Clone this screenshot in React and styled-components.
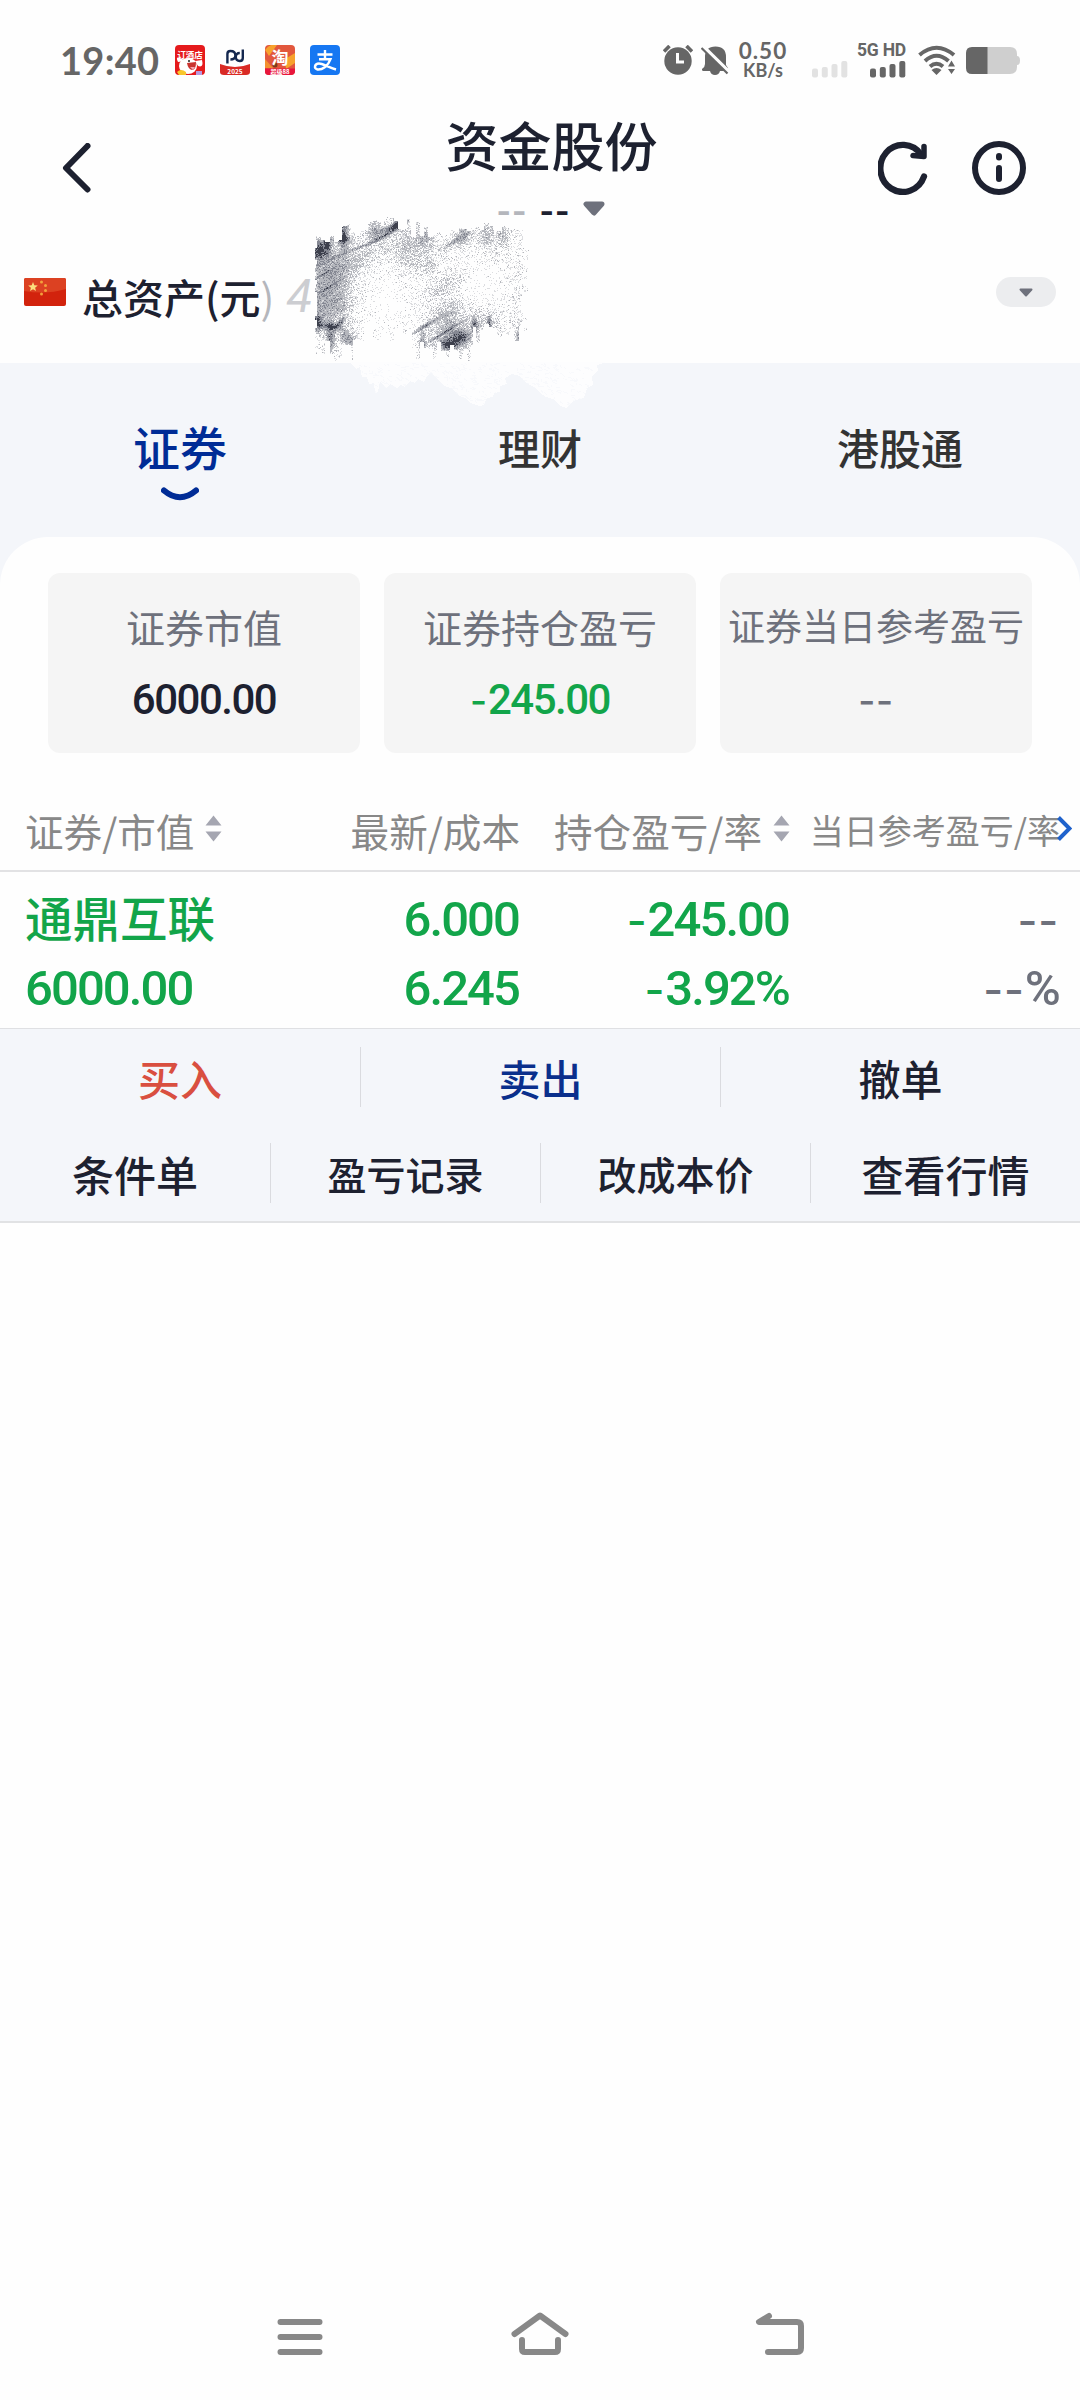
import React from 'react'
import styled, { createGlobalStyle } from 'styled-components'

const GlobalStyle = createGlobalStyle`
   * {
      box-sizing: border-box;
   }
   body {
      margin: 0;
      background: #fefefe;
      font-family: 'Noto Sans CJK SC', sans-serif;
      color: #1d2130;
   }
`

const SUMMARY = [
   { label: '证券市值', value: '6000.00', color: '#1d2130' },
   { label: '证券持仓盈亏', value: '-245.00', color: '#12a54a' },
   { label: '证券当日参考盈亏', value: '--', color: '#6e717c', small: true },
]

const TRADE_ACTIONS = [
   { label: '买入', color: '#d94f40' },
   { label: '卖出', color: '#0a2f8c' },
   { label: '撤单' },
]

const MORE_ACTIONS = [
   { label: '条件单' },
   { label: '盈亏记录', size: 39 },
   { label: '改成本价', size: 39 },
   { label: '查看行情' },
]

// small seeded generator, keeps the brush strokes the same on every render
const seeded = (seed) => () => {
   seed = (seed * 1664525 + 1013904223) % 4294967296
   return seed / 4294967296
}

// x, y, radius x, radius y, slope, weight
const BLOBS = [
   [5, 36, 7, 9, -0.3, 1.3],
   [13, 28, 3, 11, 0, 1.1],
   [29, 20, 4, 12, 0, 1.2],
   [28, 25, 9, 3, 0, 0.9],
   [60, 16, 8, 10, -0.3, 0.5],
   [80, 12, 12, 3, -0.4, 1.3],
   [72, 20, 14, 2, -0.5, 0.9],
   [82, 6, 3, 7, 0, 0.9],
   [94, 36, 15, 18, -0.3, 0.36],
   [112, 24, 8, 12, 0, 0.38],
   [112, 52, 10, 7, 0, 0.28],
   [16, 60, 24, 34, 0, 0.46],
   [14, 92, 24, 22, 0, 0.4],
   [14, 73, 14, 1.3, -0.6, 0.7],
   [8, 60, 12, 1.3, -0.6, 0.5],
   [45, 33, 34, 1.5, -0.4, 0.45],
   [3, 108, 4, 8, 0, 1.1],
   [16, 112, 10, 3, 0.1, 1.1],
   [26, 108, 5, 3, -0.8, 0.8],
   [16, 124, 4, 13, 0, 0.9],
   [34, 124, 8, 7, 0.4, 0.8],
   [50, 42, 36, 12, -0.4, 0.24],
   [110, 112, 12, 2, -0.6, 0.9],
   [108, 128, 3, 11, 0, 0.8],
   [130, 118, 18, 1.6, -0.6, 0.7],
   [134, 130, 9, 5, 0, 1.4],
   [146, 123, 9, 7, 0, 1.3],
   [132, 106, 15, 24, -0.3, 0.42],
   [132, 70, 18, 8, -0.4, 0.24],
   [160, 110, 2.5, 7, 0, 1],
   [175, 108, 2, 7, 0, 0.9],
   [166, 108, 18, 14, 0, 0.3],
   [204, 124, 2.5, 12, 0, 0.6],
   [150, 20, 9, 10, -0.5, 0.5],
   [138, 28, 12, 3, -0.6, 0.5],
   [172, 20, 8, 14, 0, 0.4],
   [188, 20, 7, 12, 0, 0.4],
]

// soft fall-off around a point, used where the brush leaves almost nothing
const falloff = (x, y, cx, cy, rx, ry) => Math.exp(-(((x - cx) / rx) ** 2) - ((y - cy) / ry) ** 2)

const makeStrokes = () => {
   const rand = seeded(77)
   const grain = Array.from({ length: 400 }, rand)
   const topEdge = Array.from({ length: 54 }, rand)
   const bottomEdge = Array.from({ length: 54 }, rand)
   const leftEdge = Array.from({ length: 60 }, rand)
   const levels = ['', '', '', '']
   for (let y = 0; y < 148; y++) {
      for (let x = 0; x < 216; x++) {
         const top = (x < 70 ? 15 - x * 0.15 : x < 96 ? 0 : 7) + topEdge[Math.round(x / 4.3)] * 16
         const base = x > 38 && x < 98 ? 106 : x > 158 ? 108 : 126
         const bottom = base + bottomEdge[Math.round(x / 4.3)] * 21
         const ragged = leftEdge[Math.round(y / 4)] * 3
         if (y < top || y > bottom || x < ragged || x > 215 - ragged * 3) continue
         const band = grain[(Math.floor(y + x * 0.56) + 40) % 400]
         let density = 0.07 + band * 0.14
         for (const [bx, by, rx, ry, slope, weight] of BLOBS) {
            const dx = (x - bx) / rx
            const dy = (y - by - (x - bx) * slope) / ry
            density += weight * Math.exp(-(dx * dx + dy * dy))
         }
         density *= 1 - 0.85 * falloff(x, y, 70, 88, 30, 40)
         density *= 1 - 0.75 * falloff(x, y, 168, 68, 28, 28)
         if (rand() > density * 1.8) continue
         const shade = density * 2.1 + rand() * 1.5 - 0.5
         const level = Math.max(0, Math.min(3, Math.floor(shade)))
         levels[level] += `M${x} ${y}h1`
      }
   }
   return levels
}

const STROKES = makeStrokes()
const STROKE_COLORS = ['#dcdde0', '#b5b7bd', '#858893', '#3d404d']

const makeSpecks = () => {
   const rand = seeded(9)
   let d = ''
   for (let i = 0; i < 520; i++) {
      const x = 45 + rand() * 230
      const y = 149 + rand() * 42
      d += `M${x.toFixed(1)} ${y.toFixed(1)}l${(rand() * 5).toFixed(1)} ${(rand() * 3).toFixed(1)}`
   }
   return d
}

const SPECKS = makeSpecks()
const WHITE_SHAPE =
   'M36 148L42 155 46 153 48 163 53 163 55 170 60 169 61 179 64 178 66 168 72 174 76 170 83 174 87 171 91 173 96 167 101 169 104 165 110 168 113 162 117 159 124 165 130 172 137 174 144 181 151 184 156 189 165 192 170 191 173 184 179 183 180 179 186 178 186 172 193 170 191 164 198 160 206 162 211 168 220 173 225 178 232 183 239 185 246 192 252 194 259 187 265 185 270 184 273 174 279 171 278 163 284 156 283 151 293 148Z'

const Brush = () => (
   <BrushSvg width="300" height="200" viewBox="0 0 300 200">
      <defs>
         <clipPath id="smear">
            <path d={WHITE_SHAPE} />
         </clipPath>
      </defs>
      <path d={WHITE_SHAPE} fill="#fdfdfe" />
      <path d={SPECKS} stroke="#f8f9fc" strokeWidth="1" clipPath="url(#smear)" />
      {STROKES.map((d, i) => (
         <path key={i} d={d} stroke={STROKE_COLORS[i]} strokeWidth="1" transform="translate(0 .5)" />
      ))}
   </BrushSvg>
)

const AppIcons = () => (
   <Row $gap={15}>
      <svg width="30" height="30" viewBox="0 0 30 30">
         <rect width="30" height="30" rx="4" fill="#e51a1c" />
         <ellipse cx="13" cy="21" rx="9" ry="8" fill="#fff" />
         <path d="M3 17q-3-6 2-4l6 3zM20 16l7-1q2 8-4 6z" fill="#fff" />
         <path d="M12 18l9-1q0 8-4 8-4-1-5-7z" fill="#c9332f" />
         <path d="M15 22h5l-2 3z" fill="#f3a2ae" />
         <circle cx="14" cy="16" r="1" fill="#222" />
         <path d="M2 27q4-4 9 0v3H4z" fill="#f8c72c" />
         <path d="M21 30v-4h6v4z" fill="#b79be0" />
         <IconText x="15" y="13" $size={8.5}>订酒店</IconText>
      </svg>
      <svg width="30" height="30" viewBox="0 0 30 30">
         <path d="M0 19q15 6 30 0v8q0 3-4 3H4q-4 0-4-3z" fill="#d92a25" />
         <g fill="none" stroke="#14284f" strokeWidth="2.4">
            <path d="M7.400 18.500V9q0-3 3-3 5 0 5 4.500 0 4-5 4" />
            <path d="M22.800 4.500V13q0 3-3 3-4 0-4-4t4-4" />
         </g>
         <IconText x="15" y="28.500" $size={6.5}>2025</IconText>
      </svg>
      <svg width="30" height="30" viewBox="0 0 30 30">
         <rect width="30" height="30" rx="4" fill="#e2573d" />
         <path d="M0 5q5-7 12-5L4 11zM20 14l10-6v10l-9 6z" fill="#f7a22d" />
         <path d="M0 14l8 9H0z" fill="#f3902f" />
         <path d="M0 23.500h30V27q-1 3-4 3H4q-4 0-4-3z" fill="#e8163c" />
         <circle cx="10" cy="20" r="2.500" fill="#7b3a1c" />
         <IconText x="15" y="18.500" $size={17}>淘</IconText>
         <IconText x="15" y="29" $size={6}>超级88</IconText>
      </svg>
      <svg width="30" height="30" viewBox="0 0 30 30">
         <rect width="30" height="30" rx="4" fill="#1677f2" />
         <path d="M7.500 9.500h15M15 5v8M9 14.200h11.500C18 21.500 12 25 7.500 24.500c-4-1-3-6 1.500-6 4 0 8 3.500 17 6" fill="none" stroke="#fff" strokeWidth="2.400" />
      </svg>
   </Row>
)

const SignalBars = ({ color }) => (
   <svg width="36" height="17" viewBox="0 0 36 17" fill={color}>
      <rect x="0" y="7.500" width="6" height="9" rx="2" />
      <rect x="9.800" y="6" width="6" height="10.500" rx="2" />
      <rect x="19.500" y="3" width="6" height="13.500" rx="2" />
      <rect x="29.300" y="0" width="6" height="16.500" rx="2" />
   </svg>
)

const StatusBar = () => (
   <Status>
      <Clock>19:40</Clock>
      <AppIcons />
      <StatusRight>
         <svg width="30" height="30" viewBox="0 0 30 30">
            <circle cx="15" cy="16" r="13.700" fill="#666" />
            <path d="M1 6.500L6.500 1M29 6.500L23.500 1" stroke="#666" strokeWidth="3.600" />
            <path d="M14.500 8v9h6.500" fill="none" stroke="#fefefe" strokeWidth="3" />
         </svg>
         <svg width="28" height="31" viewBox="0 0 28 31">
            <path d="M4 12Q4 1.500 14.500 1.500 25 1.500 25 12v8l2 3q.5 3-2 3h-6q-1 4-5 4t-5-4H2q-1.500-.5-1-2 3-2 3-5z" fill="#666" />
            <path d="M2 1.500L28 27" stroke="#fefefe" strokeWidth="4" />
            <path d="M.5 3L26.500 28.500" stroke="#666" strokeWidth="2.200" />
         </svg>
         <Speed>
            <SpeedValue>0.50</SpeedValue>
            <SpeedUnit>KB/s</SpeedUnit>
         </Speed>
         <Sim $left={24}>
            <SignalBars color="#e2e2e2" />
         </Sim>
         <Sim $left={9}>
            <Network>5G HD</Network>
            <SignalBars color="#666" />
         </Sim>
         <Wifi width="38" height="31" viewBox="0 0 38 31">
            <g fill="none" stroke="#666" strokeWidth="4">
               <path d="M1.500 10Q18.500-4.500 36 10" />
               <path d="M7 16Q18.500 5.500 30.500 16" />
               <path d="M12 21.500q6.500-5.500 13 0" />
            </g>
            <path d="M13.500 25q5-4 10 0l-5 5zM30 21.500l3.500-6 3.500 6zM30 24h7l-3.500 5z" fill="#666" />
         </Wifi>
         <svg width="54" height="27" viewBox="0 0 54 27">
            <path d="M7 0h37q7 0 7 7v2q3 0 3 4.500T51 18v2q0 7-7 7H7z" fill="#cfcfcf" />
            <path d="M6 0h15.500v27H6q-6 0-6-6V6q0-6 6-6z" fill="#666" />
         </svg>
      </StatusRight>
   </Status>
)

const SortIcon = () => (
   <Sort width="17" height="27" viewBox="0 0 17 27" fill="#a5a6b1">
      <path d="M8.500 0.500L16.500 10.500H.5zM8.500 26.500L16.500 16.500H.5z" />
   </Sort>
)

// the minus signs are set wider than the digits
const Digits = ({ value }) => {
   const dashes = value.match(/^-*/)[0]
   return (
      <>
         {dashes && <Minus>{dashes}</Minus>}
         {value.slice(dashes.length)}
      </>
   )
}

const Actions = ({ items }) => (
   <ActionRow>
      {items.map(({ label, color, size }) => (
         <Action key={label} $color={color} $size={size}>
            {label}
         </Action>
      ))}
   </ActionRow>
)

const App = () => {
   return (
      <Screen>
         <GlobalStyle />
         <StatusBar />

         <Header>
            <HeaderSide>
               <svg width="30" height="50" viewBox="0 0 30 50">
                  <path d="M25.500 3L4 25l21.500 21.500" fill="none" stroke="#1d2130" strokeWidth="6" strokeLinecap="round" strokeLinejoin="round" />
               </svg>
            </HeaderSide>
            <HeaderCenter>
               <Title>资金股份</Title>
               <Account>
                  <Dashes $faded>--</Dashes>
                  <Dashes>--</Dashes>
                  <Caret width="22" height="15" viewBox="0 0 22 15">
                     <path d="M3 3h16l-8 9z" fill="#6e717c" stroke="#6e717c" strokeWidth="5" strokeLinejoin="round" />
                  </Caret>
               </Account>
            </HeaderCenter>
            <HeaderSide $end>
               <svg width="50" height="54" viewBox="0 0 50 54">
                  <path d="M46 35.500A22.500 23.500 0 1 1 43 13.500" fill="none" stroke="#1d2130" strokeWidth="6.300" strokeLinecap="round" />
                  <path d="M46 5.500V15.500L35 14.500" fill="none" stroke="#1d2130" strokeWidth="5.500" strokeLinecap="round" strokeLinejoin="round" />
               </svg>
               <svg width="54" height="54" viewBox="0 0 54 54">
                  <circle cx="27" cy="27" r="24" fill="none" stroke="#1d2130" strokeWidth="6" />
                  <path d="M27 15v1.500M27 27v11" stroke="#1d2130" strokeWidth="6" strokeLinecap="round" />
               </svg>
            </HeaderSide>
         </Header>

         <Assets>
            <svg width="42" height="28" viewBox="0 0 42 28">
               <rect width="42" height="28" rx="2" fill="#d2230d" />
               <path d="M0 2q0-2 2-2h38q2 0 2 2v9Q22 17 0 13z" fill="#dc4122" />
               <path d="M9 4l1.300 3.300 3.500.2-2.700 2.200.9 3.400L9 11.200l-3 1.900.9-3.400L4.200 7.500l3.500-.2z" fill="#fbdf7e" />
               <g fill="#f3a13c">
                  <circle cx="17.500" cy="4" r="1.500" />
                  <circle cx="21.500" cy="7.500" r="1.500" />
                  <circle cx="21.500" cy="12.500" r="1.500" />
                  <circle cx="17.500" cy="16" r="1.500" />
               </g>
            </svg>
            <AssetLabel>
               总资产(元<Faded>)</Faded>
               <Amount>4</Amount>
            </AssetLabel>
            <Pill>
               <svg width="14" height="9" viewBox="0 0 14 9">
                  <path d="M1.500 1.500h11L7 7.500z" fill="#6e717c" stroke="#6e717c" strokeWidth="2" strokeLinejoin="round" />
               </svg>
            </Pill>
            <Brush />
         </Assets>

         <Band>
            <Tabs>
               <Tab $active>
                  证券
                  <Smile width="38" height="14" viewBox="0 0 38 14">
                     <path d="M3 3.500Q19 17 35 3.500" fill="none" stroke="#002c96" strokeWidth="6" strokeLinecap="round" />
                  </Smile>
               </Tab>
               <Tab>理财</Tab>
               <Tab>港股通</Tab>
            </Tabs>
            <Panel>
               {SUMMARY.map((item) => (
                  <Card key={item.label}>
                     <CardLabel $small={item.small}>{item.label}</CardLabel>
                     <CardValue $color={item.color}>
                        <Digits value={item.value} />
                     </CardValue>
                  </Card>
               ))}
            </Panel>
         </Band>

         <TableHead>
            <HeadCell $align="flex-start">
               证券/市值
               <SortIcon />
            </HeadCell>
            <HeadCell>最新/成本</HeadCell>
            <HeadCell>
               持仓盈亏/率
               <SortIcon />
            </HeadCell>
            <HeadCell $small>
               当日参考盈亏/率
               <More width="15" height="25" viewBox="0 0 15 25">
                  <path d="M1.500 1.500L12.500 12.500 1.500 23.500" fill="none" stroke="#1f62cc" strokeWidth="4" />
               </More>
            </HeadCell>
         </TableHead>

         <Holding>
            <Cell $left>
               <StockName>通鼎互联</StockName>
               <Figure>6000.00</Figure>
            </Cell>
            <Cell>
               <Figure>6.000</Figure>
               <Figure>6.245</Figure>
            </Cell>
            <Cell>
               <Figure>
                  <Digits value="-245.00" />
               </Figure>
               <Figure>
                  <Digits value="-3.92%" />
               </Figure>
            </Cell>
            <Cell $muted>
               <Figure>
                  <Digits value="--" />
               </Figure>
               <Figure>
                  <Digits value="--%" />
               </Figure>
            </Cell>
         </Holding>

         <ActionPanel>
            <Actions items={TRADE_ACTIONS} />
            <Actions items={MORE_ACTIONS} />
         </ActionPanel>

         <NavBar>
            <svg width="60" height="44" viewBox="0 0 60 44">
               <path d="M10.500 10h39M10.500 25h39M10.500 40h39" />
            </svg>
            <svg width="60" height="44" viewBox="0 0 60 44">
               <path d="M4.500 22L30 3.500 55.500 22M12 28v9q0 3 3 3h30q3 0 3-3v-9" />
            </svg>
            <svg width="60" height="44" viewBox="0 0 60 44">
               <path d="M19 4L9 10h38q4 0 4 4v22q0 4-4 4H18" />
            </svg>
         </NavBar>
      </Screen>
   )
}

export default App

const Screen = styled.div`
   display: flex;
   flex-direction: column;
   width: 1080px;
   height: 2400px;
   overflow: hidden;
`
const Row = styled.div`
   display: flex;
   align-items: center;
   gap: ${({ $gap }) => $gap}px;
`
const Status = styled.div`
   display: flex;
   align-items: center;
   height: 120px;
   padding: 0 60px;
   color: #666;
   font-family: 'Lato', sans-serif;
   font-weight: 700;
`
const Clock = styled.div`
   width: 115px;
   font-size: 38px;
   letter-spacing: 0.3px;
`
const IconText = styled.text`
   font-family: 'Noto Sans CJK SC', sans-serif;
   font-size: ${({ $size }) => $size}px;
   font-weight: 700;
   fill: #fff;
   text-anchor: middle;
`
const StatusRight = styled.div`
   display: flex;
   align-items: center;
   margin-left: auto;

   > svg + svg {
      margin-left: 8px;
   }
`
const Speed = styled.div`
   display: flex;
   flex-direction: column;
   align-items: center;
   width: 50px;
   margin-left: 9px;
   white-space: nowrap;
`
const SpeedValue = styled.div`
   font-size: 22.5px;
   line-height: 20px;
   letter-spacing: 1px;
`
const SpeedUnit = styled.div`
   font-size: 18px;
   line-height: 19px;
`
const Sim = styled.div`
   display: flex;
   flex-direction: column;
   align-items: flex-end;
   justify-content: flex-end;
   height: 36px;
   margin-left: ${({ $left }) => $left}px;
`
const Network = styled.div`
   margin-bottom: 3px;
   font-family: 'Roboto', sans-serif;
   font-size: 17.5px;
   line-height: 15px;
   font-weight: 700;
   letter-spacing: -0.2px;
`
const Wifi = styled.svg`
   margin: 0 2px 0 12px;
`
const Header = styled.div`
   display: flex;
   justify-content: space-between;
   height: 96px;
   padding: 0 54px 0 62px;
`
const HeaderSide = styled.div`
   display: flex;
   align-items: center;
   gap: 44px;
   width: 150px;
   justify-content: ${({ $end }) => ($end ? 'flex-end' : 'flex-start')};
`
const HeaderCenter = styled.div`
   display: flex;
   flex-direction: column;
   align-items: center;
   margin-left: 15px;
`
const Title = styled.h1`
   margin: 0 0 33px;
   font-size: 53px;
   line-height: 48px;
   font-weight: 500;
`
const Account = styled.div`
   display: flex;
   align-items: center;
   height: 15px;
   margin-left: -1px;
`
const Dashes = styled.span`
   width: 43px;
   padding-top: 9px;
   font-family: 'Roboto', sans-serif;
   font-size: 40px;
   line-height: 10px;
   font-weight: 500;
   letter-spacing: 2px;
   color: ${({ $faded }) => ($faded ? '#b4b6bc' : '#1d2130')};
`
const Caret = styled.svg`
   flex: none;
`
const Assets = styled.div`
   position: relative;
   display: flex;
   align-items: center;
   height: 147px;
   padding: 5px 24px 0;
`
const AssetLabel = styled.div`
   display: flex;
   align-items: center;
   margin-left: 16px;
   padding-top: 8px;
   font-size: 41px;
   line-height: 42px;
   font-weight: 500;
`
const Faded = styled.span`
   font-weight: 400;
   color: #b4b6bc;
`
const Amount = styled.span`
   margin-left: 12px;
   font-family: 'Roboto', sans-serif;
   font-size: 47px;
   font-weight: 400;
   font-style: italic;
   letter-spacing: -6px;
   color: #cccdd1;
`
const Pill = styled.div`
   display: flex;
   align-items: center;
   justify-content: center;
   width: 60px;
   height: 30px;
   margin-left: auto;
   border-radius: 15px;
   background: #ecedef;
`
const BrushSvg = styled.svg`
   position: absolute;
   left: 314px;
   top: -2px;
   z-index: 1;
   shape-rendering: crispEdges;
`
const Band = styled.div`
   background: #f4f6fa;
`
const Tabs = styled.div`
   display: grid;
   grid-template-columns: repeat(3, 1fr);
   height: 174px;
   padding-top: 54px;
`
const Tab = styled.div`
   display: flex;
   flex-direction: column;
   align-items: center;
   font-size: ${({ $active }) => ($active ? 47 : 42)}px;
   line-height: ${({ $active }) => ($active ? 58 : 60)}px;
   font-weight: 500;
   color: ${({ $active }) => ($active ? '#002c96' : '#333')};
`
const Smile = styled.svg`
   margin-top: 12px;
`
const Panel = styled.div`
   display: grid;
   grid-template-columns: repeat(3, 312px);
   gap: 24px;
   height: 216px;
   padding: 36px 48px 0;
   border-radius: 48px 48px 0 0;
   background: #fefefe;
`
const Card = styled.div`
   display: flex;
   flex-direction: column;
   align-items: center;
   height: 180px;
   padding-top: 28px;
   border-radius: 12px;
   background: #f5f5f5;
`
const CardLabel = styled.div`
   height: 60px;
   font-size: ${({ $small }) => ($small ? 37 : 39)}px;
   line-height: ${({ $small }) => ($small ? 48 : 50)}px;
   white-space: nowrap;
   color: #6e717c;
`
const CardValue = styled.div`
   height: 52px;
   margin-top: 13px;
   font-family: 'Roboto', sans-serif;
   font-size: 42px;
   line-height: 52px;
   font-weight: 500;
   letter-spacing: -1.5px;
   color: ${({ $color }) => $color};
`
const Minus = styled.span`
   font-family: 'Inter', sans-serif;
   font-size: 0.88em;
   line-height: 1;
   letter-spacing: 0.02em;
`
const TableHead = styled.div`
   display: grid;
   grid-template-columns: 225px 270px 270px 270px;
   height: 119px;
   padding-left: 25px;
   border-bottom: 2px solid #e2e2e4;
`
const HeadCell = styled.div`
   display: flex;
   align-items: center;
   justify-content: ${({ $align }) => $align || 'flex-end'};
   padding-top: 36px;
   font-size: ${({ $small }) => ($small ? 34 : 38.6)}px;
   white-space: nowrap;
   color: #888;
`
const Sort = styled.svg`
   margin: -3px 0 0 11px;
`
const More = styled.svg`
   margin: -3px -12px 0 -4px;
`
const Holding = styled.div`
   display: grid;
   grid-template-columns: 224px 270px 270px 270px;
   height: 157px;
   padding: 13px 0 0 25px;
   border-bottom: 1px solid #dfe0e3;
`
const Cell = styled.div`
   display: flex;
   flex-direction: column;
   align-items: ${({ $left }) => ($left ? 'flex-start' : 'flex-end')};
   color: ${({ $muted }) => ($muted ? '#6e717c' : '#12a54a')};
`
const StockName = styled.div`
   height: 69px;
   font-size: 47.5px;
   line-height: 64px;
   font-weight: 500;
`
const Figure = styled.div`
   height: 69px;
   font-family: 'Roboto', sans-serif;
   font-size: 49px;
   line-height: 69px;
   font-weight: 500;
   letter-spacing: -1.9px;
`
const ActionPanel = styled.div`
   border-bottom: 2px solid #e1e2e4;
   background: #f4f6fa;
`
const ActionRow = styled.div`
   display: grid;
   grid-auto-flow: column;
   grid-auto-columns: 1fr;
   align-items: center;
   height: 96px;
`
const Action = styled.div`
   height: 60px;
   font-size: ${({ $size }) => $size || 42}px;
   line-height: 61px;
   font-weight: 500;
   text-align: center;
   color: ${({ $color }) => $color || '#1d2130'};

   & + & {
      border-left: 1px solid #dadbdf;
   }
`
const NavBar = styled.div`
   display: flex;
   justify-content: center;
   gap: 180px;
   margin-top: auto;
   padding-bottom: 44px;

   svg {
      fill: none;
      stroke: #888;
      stroke-width: 6px;
      stroke-linecap: round;
      stroke-linejoin: round;
   }
`
